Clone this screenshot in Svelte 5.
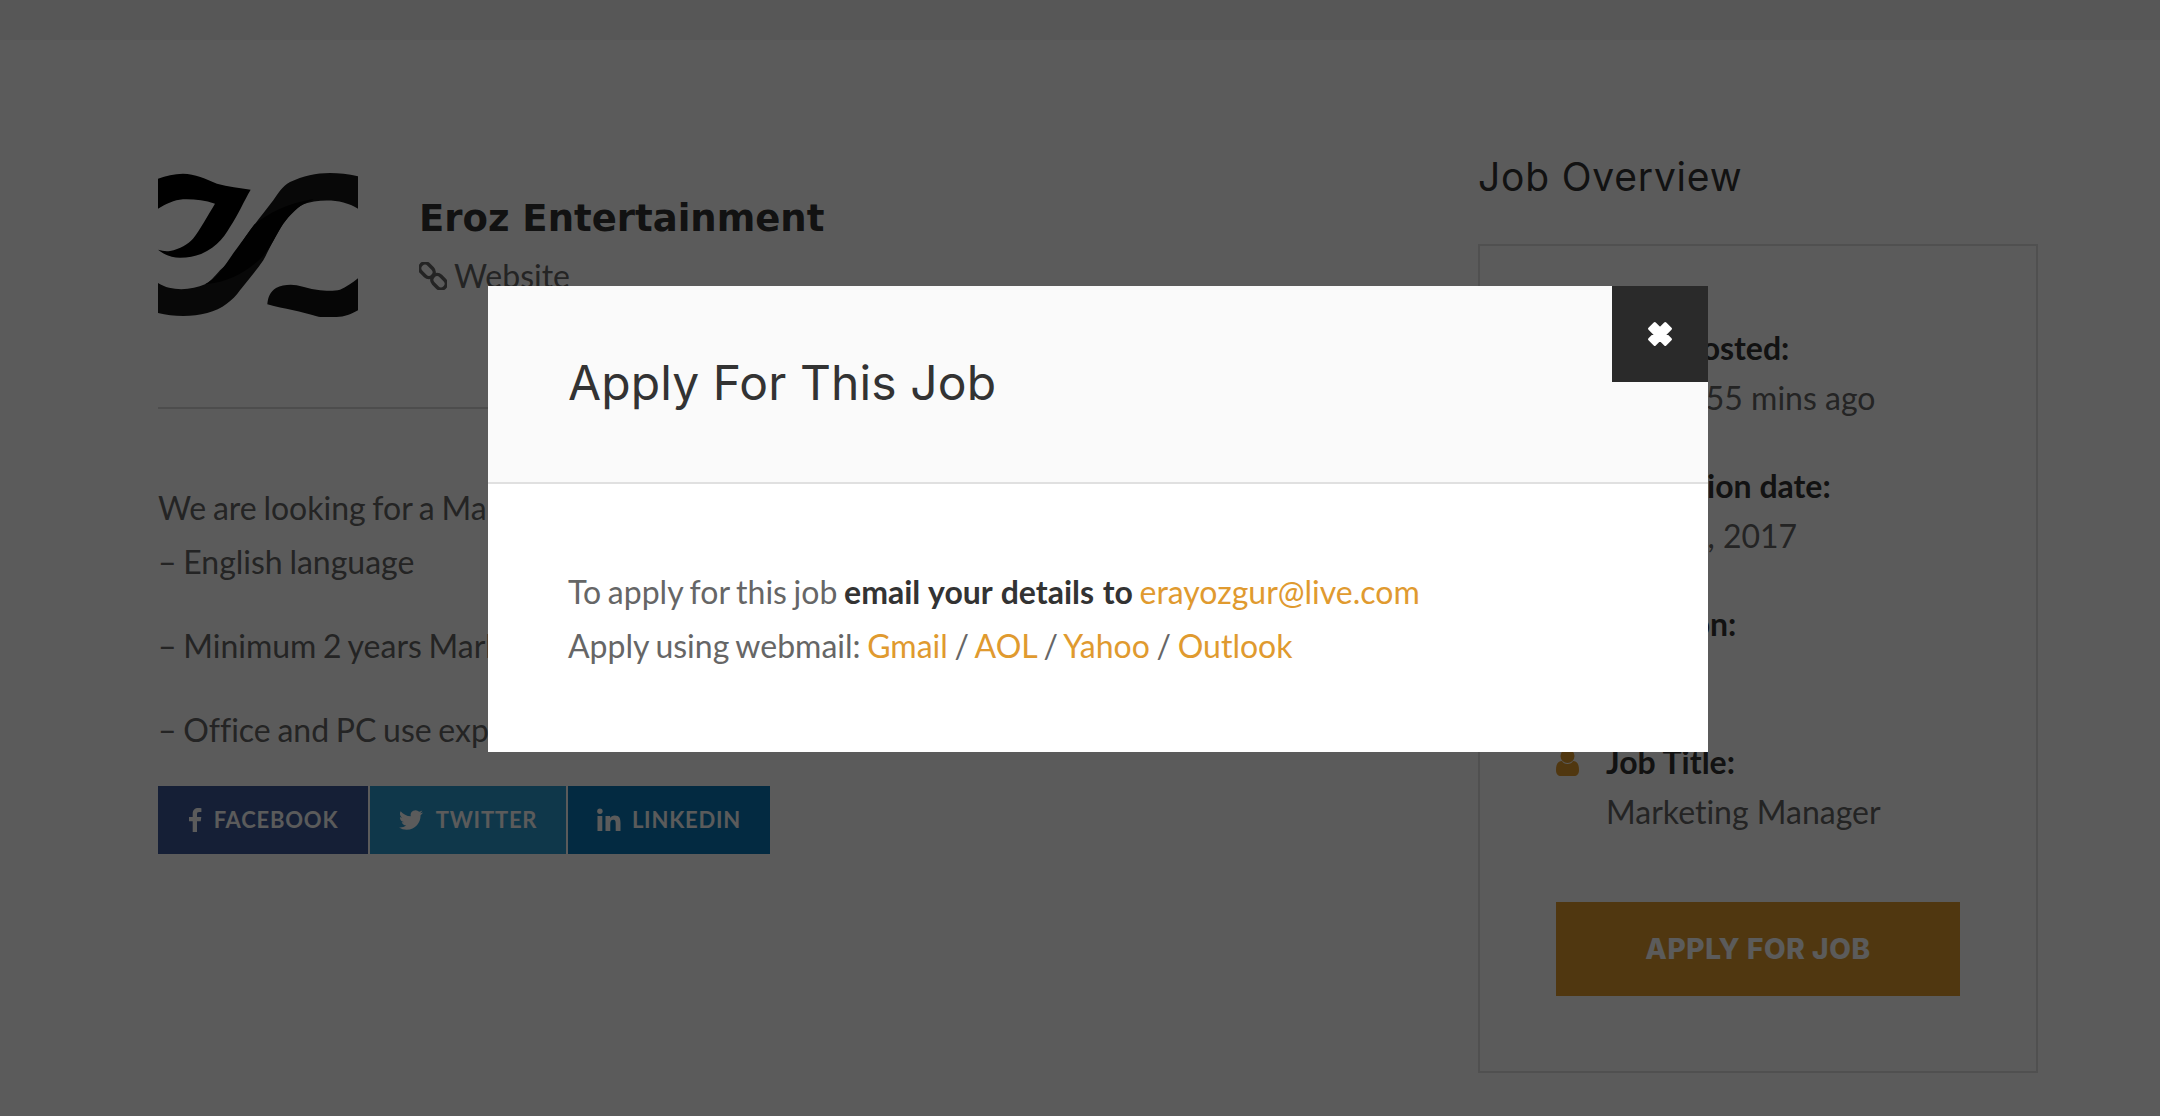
<script>
	const overview = [
		{ label: 'Date Posted:', value: '1 hour 55 mins ago', icon: 'cal' },
		{ label: 'Expiration date:', value: 'Mar 21, 2017', icon: 'cal' },
		{ label: 'Location:', value: 'Turkey', icon: 'pin' },
		{ label: 'Job Title:', value: 'Marketing Manager', icon: 'user' }
	];
</script>

<div class="page">
	<div class="topbar"></div>
	<div class="content">
		<main class="job">
			<header class="company">
				<svg class="logo" viewBox="0 0 200 144" aria-hidden="true">
					<path fill="#000" d="M0 5.700C8 3 16 .7 25 .7C37 .7 48 6 59 10.700C70 14 82 15 92.700 16.700C86 28 80 42 72 54C64 68 50 84.700 22 84.700C13 84.700 5 81 0 76.700C4 78 8 78.500 12 78C22 76 30 71 35 65.700C42 57 50 42 57 30.700C46 27 36 26 25 26.300C16 27 8 31 0 35.700Z" />
					<path fill="#181818" d="M200 3.300C190 1 181 0 172 0C158 0 145 3 132 9C124 13 120 21 115.300 27.300C107 38 100 47 92 57.300C82 71 74 87 62 97.300C56 104 52 109 47 111.300C34 117 14 119 0 110V140C8 142 16 143 25.300 143C42 143 58 139 68.700 130.700C74 127 78 123 82 117.300C90 107 98 98 105.300 87.300C112 75 118 61 125.300 50.700C130 44 134 39 138.700 35.700C144 31 150 29.500 156 28.500C172 26 188 28 200 35.700Z" />
					<path fill="#050505" d="M96 52C110 40 130 30 156 26L150 29C140 33 132 42 125 51C116 66 110 80 100 88C86 100 70 109 47 111.300C56 107 62 100 70 88C78 76 86 66 96 52Z" />
					<path fill="#121212" d="M109.300 131.300C110 124 112 119 118 115C124 112 132 111 138.700 112.300C146 114 152 116 158.700 116.700C168 118 176 118 182 116.700C188 114 194 110 200 105.300V137.300C194 141 186 144 178.700 144C172 144 165 145 158.700 143.300C150 141 143 139 135.300 137.300C126 135 118 134 109.300 131.300Z" />
				</svg>
				<div class="company-info">
					<h2>Eroz Entertainment</h2>
					<a class="website" href="#site">
						<svg viewBox="0 0 28 28" aria-hidden="true"><g fill="none" stroke="#666" stroke-width="3.500"><rect x="0" y="3" width="16" height="10.500" rx="5.200" transform="rotate(45 8 8.200)" /><rect x="12" y="14.500" width="16" height="10.500" rx="5.200" transform="rotate(45 20 19.800)" /></g></svg>
						Website
					</a>
				</div>
			</header>
			<hr />
			<div class="description">
				<p>We are looking for a Marketing Manager with the following skills:<br />– English language</p>
				<p>– Minimum 2 years Marketing experience</p>
				<p>– Office and PC use experience</p>
			</div>
			<div class="share">
				<a class="facebook" href="#fb">
					<svg viewBox="0 0 14 24" width="14" height="24" aria-hidden="true"><path d="M9 24V13.200h3.700l.6-4.300H9V6.200c0-1.200.4-2.100 2.200-2.100h2.200V.2C13 .1 11.700 0 10.300 0 7 0 4.700 2 4.700 5.700v3.200H1v4.300h3.700V24z" /></svg>
					FACEBOOK
				</a>
				<a class="twitter" href="#tw">
					<svg viewBox="0 0 24 24" width="24" height="24" aria-hidden="true"><path d="M23.953 4.57a10 10 0 01-2.825.775 4.958 4.958 0 002.163-2.723c-.951.555-2.005.959-3.127 1.184a4.92 4.92 0 00-8.384 4.482C7.69 8.095 4.067 6.13 1.64 3.162a4.822 4.822 0 00-.666 2.475c0 1.71.87 3.213 2.188 4.096a4.904 4.904 0 01-2.228-.616v.06a4.923 4.923 0 003.946 4.827 4.996 4.996 0 01-2.212.085 4.936 4.936 0 004.604 3.417 9.867 9.867 0 01-6.102 2.105c-.39 0-.779-.023-1.17-.067a13.995 13.995 0 007.557 2.209c9.053 0 13.998-7.496 13.998-13.985 0-.21 0-.42-.015-.63A9.935 9.935 0 0024 4.59z" /></svg>
					TWITTER
				</a>
				<a class="linkedin" href="#in">
					<svg viewBox="0 0 24 24" width="24" height="24" aria-hidden="true"><circle cx="2.900" cy="3.200" r="2.700" /><rect x=".5" y="8" width="4.800" height="15" /><path d="M8.500 8h4.600v2.100c.8-1.400 2.500-2.500 4.700-2.500 4.800 0 5.700 3.100 5.700 7.300V23h-4.800v-7.200c0-1.800-.1-4-2.500-4s-2.900 1.900-2.900 3.900V23H8.500z" /></svg>
					LINKEDIN
				</a>
			</div>
		</main>

		<aside class="sidebar">
			<h3>Job Overview</h3>
			<div class="box">
				<ul>
					{#each overview as item}
						<li>
							<span class="icon">
								{#if item.icon === 'user'}
									<svg viewBox="0 0 23 28" aria-hidden="true"><circle cx="11.500" cy="7" r="7" /><path d="M0 21c0-6 2-9 6-9 1 2 3 3 5.500 3s4.500-1 5.500-3c4 0 6 3 6 9 0 4-2 6-5 6H5c-3 0-5-2-5-6z" /></svg>
								{/if}
							</span>
							<div>
								<strong>{item.label}</strong>
								<span class="value">{item.value}</span>
							</div>
						</li>
					{/each}
				</ul>
				<a class="apply" href="#apply">APPLY FOR JOB</a>
			</div>
		</aside>
	</div>

	<div class="overlay"></div>

	<div class="modal">
		<div class="modal-head">
			<h2>Apply For This Job</h2>
			<button class="close" aria-label="Close">
				<svg viewBox="0 0 24 24" width="28" height="28" aria-hidden="true"><path d="M3 7.500 7.500 3 12 7.500 16.500 3 21 7.500 16.500 12 21 16.500 16.500 21 12 16.500 7.500 21 3 16.500 7.500 12z" stroke="#fff" stroke-width="2.500" stroke-linejoin="round" fill="#fff" /></svg>
			</button>
		</div>
		<div class="modal-body">
			<p>To apply for this job <strong>email your details to</strong> <a href="#mail">erayozgur@live.com</a></p>
			<p>Apply using webmail: <a href="#g">Gmail</a> / <a href="#a">AOL</a> / <a href="#y">Yahoo</a> / <a href="#o">Outlook</a></p>
		</div>
	</div>
</div>

<style>
	:global(body) {
		margin: 0;
		background: #fff;
	}

	.page {
		position: relative;
		width: 2160px;
		height: 1116px;
		overflow: hidden;
		font-family: Lato, sans-serif;
		font-size: 32px;
		line-height: 54px;
		word-spacing: -1.500px;
		font-variant-ligatures: none;
		color: #666;
		background: #fff;
	}

	.topbar {
		height: 40px;
		background: #f4f4f4;
	}

	.content {
		display: flex;
		padding: 0 122px 0 158px;
	}

	.job {
		width: 1320px;
		padding-top: 133px;
	}

	.company {
		display: flex;
		gap: 61px;
	}

	.logo {
		display: block;
		width: 200px;
		height: 144px;
	}

	.company-info {
		padding-top: 19px;
	}

	.company-info h2 {
		margin: 0;
		font-family: "DejaVu Sans", sans-serif;
		font-size: 37px;
		font-weight: 700;
		line-height: 54px;
		color: #333;
		word-spacing: 0;
	}

	.website {
		display: flex;
		align-items: center;
		gap: 7px;
		margin-top: 3px;
		color: #666;
		text-decoration: none;
	}

	.website svg {
		width: 28px;
		height: 28px;
	}

	hr {
		height: 2px;
		margin: 90px 0 0;
		border: 0;
		background: #d8d8d8;
	}

	.description {
		padding-top: 72px;
	}

	.description p {
		margin: 0 0 30px;
	}

	.share {
		display: flex;
		gap: 2px;
		margin-top: -1px;
	}

	.share a {
		display: flex;
		align-items: center;
		justify-content: center;
		height: 68px;
		font-size: 22px;
		font-weight: 700;
		letter-spacing: 0.800px;
		color: #fff;
		text-decoration: none;
	}

	.share svg {
		fill: #fff;
	}

	.facebook {
		width: 210px;
		gap: 12px;
		background: #3b5998;
	}

	.twitter {
		width: 196px;
		gap: 13px;
		background: #2a9ad0;
	}

	.linkedin {
		width: 202px;
		gap: 11px;
		background: #0a77b5;
	}

	.sidebar {
		width: 560px;
		padding-top: 110px;
		word-spacing: 0;
	}

	.sidebar h3 {
		margin: 0 0 40px;
		font-family: Inter, sans-serif;
		font-size: 39px;
		font-weight: 400;
		line-height: 54px;
		color: #333;
		letter-spacing: 0.800px;
	}

	.box {
		height: 829px;
		box-sizing: border-box;
		padding: 77px 76px 0;
		border: 2px solid #e0e0e0;
	}

	.box ul {
		margin: 0;
		padding: 0;
		list-style: none;
	}

	.box li {
		display: flex;
		height: 138px;
	}

	.icon {
		width: 50px;
		flex: none;
		padding-top: 12px;
	}

	.icon svg {
		display: block;
		width: 23px;
		height: 28px;
		fill: #e09a2f;
	}

	.box strong {
		display: block;
		line-height: 50px;
		color: #333;
		font-weight: 700;
	}

	.value {
		display: block;
		line-height: 50px;
	}

	.apply {
		display: flex;
		align-items: center;
		justify-content: center;
		height: 94px;
		margin-top: 27px;
		font-family: Inter, sans-serif;
		font-size: 28px;
		font-weight: 800;
		letter-spacing: 0.600px;
		color: #fff;
		background: #e09a2f;
		text-decoration: none;
	}

	.overlay {
		position: absolute;
		inset: 0;
		background: rgba(0, 0, 0, 0.643);
	}

	.modal {
		position: absolute;
		left: 488px;
		top: 286px;
		width: 1220px;
		background: #fff;
	}

	.modal-head {
		position: relative;
		box-sizing: border-box;
		height: 198px;
		padding: 70px 80px 0;
		background: #fafafa;
		border-bottom: 2px solid #e0e0e0;
	}

	.modal-head h2 {
		margin: 0;
		font-family: Inter, sans-serif;
		font-size: 48px;
		font-weight: 400;
		line-height: 54px;
		color: #333;
		letter-spacing: 0.100px;
		word-spacing: 0;
	}

	.close {
		position: absolute;
		top: 0;
		right: 0;
		display: flex;
		align-items: center;
		justify-content: center;
		width: 96px;
		height: 96px;
		padding: 0;
		border: 0;
		background: #2a2a2a;
	}

	.modal-body {
		height: 268px;
		box-sizing: border-box;
		padding-top: 81px;
	}

	.modal-body p {
		margin: 0;
		padding-left: 80px;
	}

	.modal-body strong {
		color: #333;
		word-spacing: 0.800px;
	}

	.modal-body a {
		color: #e09a2f;
		text-decoration: none;
	}
</style>
